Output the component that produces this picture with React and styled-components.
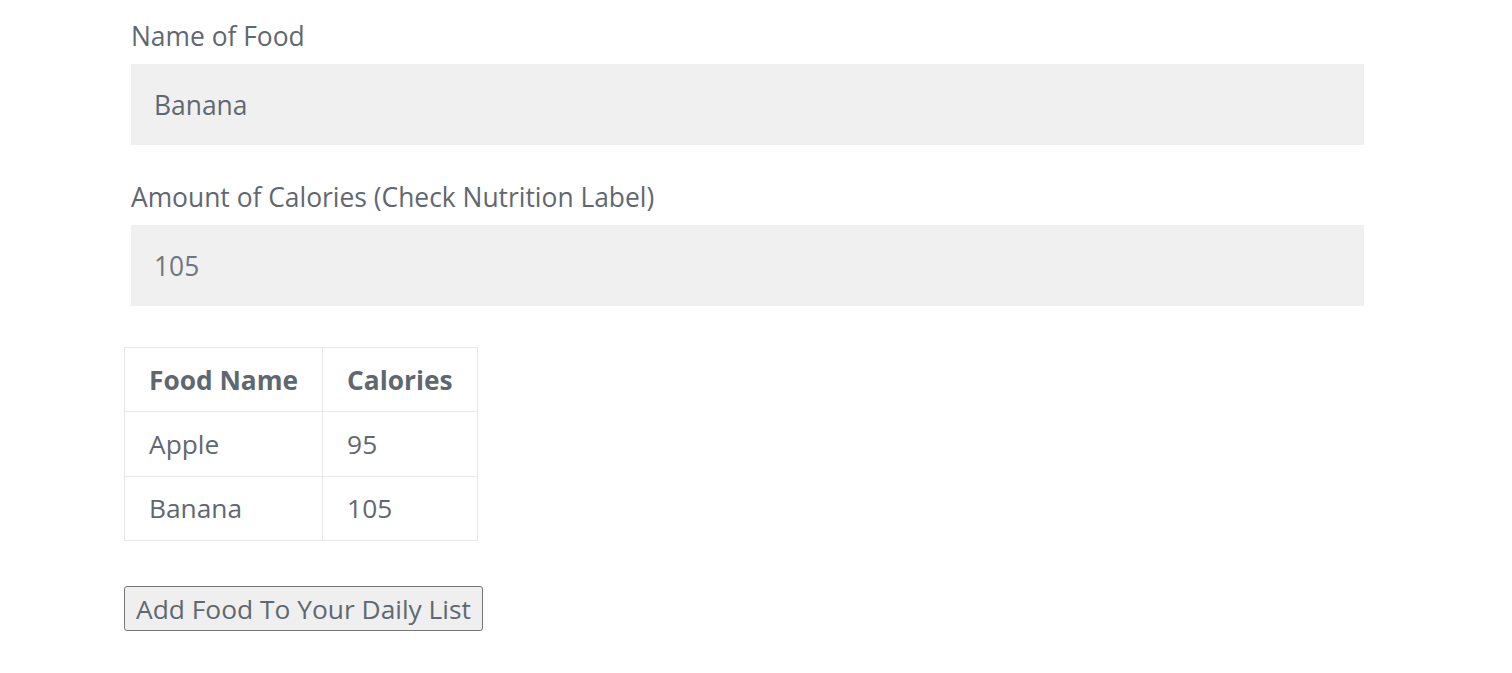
import React from 'react';
import styled, { createGlobalStyle } from 'styled-components';

const GlobalStyle = createGlobalStyle`
  body {
    margin: 0;
    background: #ffffff;
    font-family: "Open Sans", "Liberation Sans", sans-serif;
    color: #5f6870;
  }
`;

const Page = styled.div`
  padding: 18px 0 0 124px;
  width: 1240px;
`;

const Field = styled.div`
  display: flex;
  flex-direction: column;
  padding-left: 7px;
  margin-bottom: 34px;
`;

const Label = styled.label`
  font-size: 26.4px;
  line-height: 36px;
  margin-bottom: 10px;
`;

const Input = styled.input`
  box-sizing: border-box;
  height: 81px;
  width: 1233px;
  border: none;
  background: #f0f0f0;
  padding: 0 23px;
  font-family: inherit;
  font-size: 26.4px;
  color: ${props => (props.$muted ? '#6f777e' : '#5f6870')};
  outline: none;
`;

const Table = styled.table`
  border-collapse: collapse;
  margin-top: 41px;
  font-size: 26.3px;
`;

const Cell = styled.td`
  border: 1px solid #e8e8e8;
  height: ${props => (props.$head ? 64 : 64.5)}px;
  padding: 0 24px;
  text-align: left;
  white-space: nowrap;
  font-weight: ${props => (props.$head ? 700 : 400)};
  box-sizing: border-box;
`;

const Button = styled.button`
  display: block;
  margin-top: 45px;
  height: 45px;
  padding: 0 11px;
  font-family: inherit;
  font-size: 26.35px;
  color: #5f6870;
  background: #efefef;
  border: 1px solid #767676;
  border-radius: 3px;
`;

const rows = [
  { name: 'Apple', calories: 95 },
  { name: 'Banana', calories: 105 },
];

const App = () => (
  <Page>
    <GlobalStyle />
    <Field>
      <Label>Name of Food</Label>
      <Input defaultValue="Banana" />
    </Field>
    <Field>
      <Label>Amount of Calories (Check Nutrition Label)</Label>
      <Input $muted defaultValue="105" />
    </Field>
    <Table>
      <tbody>
        <tr>
          <Cell as="th" $head>Food Name</Cell>
          <Cell as="th" $head>Calories</Cell>
        </tr>
        {rows.map(row => (
          <tr key={row.name}>
            <Cell>{row.name}</Cell>
            <Cell>{row.calories}</Cell>
          </tr>
        ))}
      </tbody>
    </Table>
    <Button>Add Food To Your Daily List</Button>
  </Page>
);

export default App;
